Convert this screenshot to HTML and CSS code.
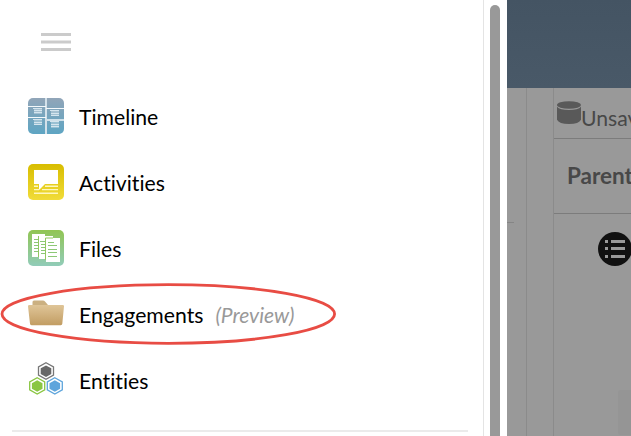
FILE: index.html
```html
<!DOCTYPE html>
<html lang="en">
<head>
<meta charset="utf-8">
<title>Navigation</title>
<link rel="stylesheet" href="styles.css">
</head>
<body>
<div class="app">
  <aside class="sidebar">
    <nav class="pane">
      <svg class="burger" viewBox="0 0 30 18"><path fill="#cbcbcb" d="M0 0h30v3H0zM0 7.400h30v3H0zM0 15h30v3H0z"/></svg>
      <ul class="menu">
        <li class="item">
          <svg class="icon" viewBox="0 0 36 36">
            <defs><linearGradient id="blue" x2="0" y2="1"><stop stop-color="#91a5b8"/><stop offset="1" stop-color="#5ea5c3"/></linearGradient></defs>
            <rect width="36" height="36" rx="5" fill="url(#blue)"/>
            <path fill="#d3e1ea" d="M17 0h2v36h-2z"/>
            <path fill="#f4f8fa" d="M0 8h18v1H0zM0 19h18v1H0zM18 10h18v1H18z"/>
            <path fill="#cfe0e9" d="M18 21h18v2H18z"/>
            <path fill="#fff" opacity=".3" d="M6 10h8v6H6zM6 21h8v6H6zM23 12h8v6h-8zM23 23h8v7h-8z"/>
            <path fill="#d5e5ee" d="M5 10h9v1H5zM6 12h8v1H6zM6 14h8v1H6zM5 21h9v1H5zM6 24h8v1H6zM6 26h8v1H6zM22 12h9v1h-9zM23 15h8v1h-8zM23 17h8v1h-8zM22 23h9v1h-9zM23 26h8v1h-8zM23 28h8v1h-8z"/>
          </svg>
          <span class="label">Timeline</span>
        </li>
        <li class="item">
          <svg class="icon" viewBox="0 0 36 36">
            <defs><linearGradient id="gold" x2="0" y2="1"><stop stop-color="#d8bd00"/><stop offset="1" stop-color="#f1dc39"/></linearGradient></defs>
            <rect width="36" height="36" rx="5" fill="url(#gold)"/>
            <path fill="#fff" d="M6 6h24v14H17l-6 6v-6H6z"/>
            <path fill="#fff8bf" d="M6 21.500h4V23H6zM17 21.500h13V23H17zM6 25h5v1.300H6zM14 25h16v1.300H14zM6 28.500h24V30H6z"/>
          </svg>
          <span class="label">Activities</span>
        </li>
        <li class="item">
          <svg class="icon" viewBox="0 0 36 36">
            <defs><linearGradient id="green" x2="0" y2="1"><stop stop-color="#91c553"/><stop offset="1" stop-color="#91ccb9"/></linearGradient></defs>
            <rect width="36" height="36" rx="5" fill="url(#green)"/>
            <path fill="#fff" d="M4 4h13v2h8v2h7v24H18v-3h-7v-2H4z"/>
            <path fill="none" stroke="#92c760" d="M10.500 27V6M17.500 30V8H25"/>
            <path fill="#8dc876" d="M6 9h4v1H6zM6 12h4v1H6zM6 15h4v1H6zM6 18h4v1H6zM6 21h4v1H6zM12 11h5v1h-5zM13 14h4v1h-4zM13 17h4v1h-4zM13 20h4v1h-4zM13 23h4v1h-4z"/>
            <path fill="#8dc876" d="M20 12h6v1h-6zM20 15h9v1h-9zM20 19h9v1h-9zM20 22h9v1h-9zM20 26h9v1h-9z"/>
          </svg>
          <span class="label">Files</span>
        </li>
        <li class="item">
          <svg class="icon" viewBox="0 0 36 36">
            <defs><linearGradient id="tan" x2="0" y2="1"><stop stop-color="#dfc598"/><stop offset="1" stop-color="#c29d63"/></linearGradient></defs>
            <path fill="#cbb081" d="M4.500 10V6q0-1.500 1.500-1.500h9q1.300 0 2 1L20 9v2H4.500z"/>
            <path fill="url(#tan)" d="M1.200 9h33.600q1.300 0 1.200 1.300l-1.700 17.500q-.1 1.400-1.500 1.400H3.500q-1.400 0-1.500-1.400L0 10.300Q0 9 1.200 9z"/>
          </svg>
          <span class="label">Engagements</span>
          <em class="note">(Preview)</em>
        </li>
        <li class="item">
          <svg class="icon" viewBox="0 0 36 36">
            <g fill="none" stroke-width="1.300">
              <path stroke="#777" d="M18 .8l7.500 4.200v8L18 17.200 10.500 13V5z"/>
              <path stroke="#8ac642" d="M9.200 15.700l7.500 4.200v8l-7.500 4.200-7.500-4.200v-8z"/>
              <path stroke="#5ea5dc" d="M26.800 15.700l7.500 4.200v8l-7.500 4.200-7.500-4.200v-8z"/>
            </g>
            <path fill="#686868" d="M18 3.400l5.300 2.900v5.600L18 14.900l-5.300-3V6.300z"/>
            <path fill="#8ac642" d="M9.200 18.300l5.300 2.900v5.600l-5.300 3-5.300-3v-5.600z"/>
            <path fill="#5ea5dc" d="M26.800 18.300l5.300 2.900v5.600l-5.300 3-5.300-3v-5.600z"/>
          </svg>
          <span class="label">Entities</span>
        </li>
      </ul>
      <hr class="rule">
    </nav>
    <div class="track"><div class="thumb"></div></div>
  </aside>
  <div class="page">
    <header class="banner"></header>
    <div class="columns">
      <div class="stub"><div class="tick"></div></div>
      <div class="gutter"></div>
      <main class="content">
        <div class="status">
          <svg class="disk" viewBox="0 0 24 24"><path fill="#595959" d="M0 5.700q3 3.200 12 3.200t12-3.200v13q-2 4.200-12 4.200T0 18.700z"/><ellipse cx="12" cy="4" rx="12" ry="3.800" fill="#595959"/></svg>
          <span>Unsaved</span>
        </div>
        <div class="heading">Parent</div>
        <div class="body">
          <svg class="list" viewBox="0 0 34 34"><circle cx="17" cy="17" r="17" fill="#111"/><path fill="#999" d="M7 8h3v3H7zM13 8h14v3H13zM7 15h3v3H7zM13 15h14v3H13zM7 23h3v3H7zM13 23h14v3H13z"/></svg>
          <div class="tile"></div>
        </div>
      </main>
    </div>
  </div>
  <svg class="marker" viewBox="0 0 336 64"><ellipse cx="168.300" cy="32" rx="166.300" ry="29.300" fill="none" stroke="#e84c44" stroke-width="2.800"/></svg>
</div>
</body>
</html>
```
FILE: styles.css
```css
* { box-sizing: border-box; }
body { margin: 0; font-family: Lato, "Liberation Sans", sans-serif; font-size: 21.2px; font-variant-ligatures: none; color: #000; }
svg { display: block; flex: none; }
.app { position: relative; display: flex; width: 631px; height: 436px; overflow: hidden; background: #fff; }
.sidebar { display: flex; flex: none; width: 507px; }
.pane { width: 484px; padding: 33px 15px 0 12px; border-right: 1px solid #e4e4e4; }
.burger { width: 30px; height: 18px; margin-left: 29px; }
.menu { list-style: none; margin: 32px 0 0; padding: 0 0 0 16px; }
.item { display: flex; align-items: center; height: 66px; white-space: nowrap; }
.icon { width: 36px; height: 36px; margin-right: 15px; }
.label, .note { line-height: 30px; padding-top: 2px; }
.note { margin-left: 12px; font-size: 21px; color: #999; }
.rule { height: 2px; margin: 17px 0 0; border: 0; background: #ebebeb; }
.track { flex: 1; padding: 5px 7px 0 6px; }
.thumb { width: 10px; height: 440px; border-radius: 5px; background: #999; }
.page { display: flex; flex-direction: column; flex: 1; min-width: 0; overflow: hidden; background: #999; color: #484848; }
.banner { flex: none; height: 88px; background: linear-gradient(#445463, #495968); }
.columns { display: flex; flex: 1; }
.stub { flex: none; width: 20px; padding-top: 134px; border-right: 1px solid #8b8b8b; }
.tick { width: 7px; height: 1px; background: #858585; }
.gutter { flex: none; width: 26px; }
.content { flex: none; width: 160px; border-left: 1px solid #8b8b8b; }
.status { display: flex; height: 51px; padding: 13px 0 0 3px; border-bottom: 1px solid #7c7c7c; line-height: 34px; }
.disk { width: 24px; height: 24px; }
.heading { height: 75px; padding-left: 13px; border-bottom: 1px solid #7c7c7c; font-size: 22.5px; font-weight: 700; line-height: 74px; }
.body { padding: 18px 0 0 44px; }
.list { width: 34px; height: 34px; }
.tile { width: 80px; height: 45px; margin: 124px 0 0 20px; border-radius: 3px; background: #959595; }
.marker { position: absolute; left: 0; top: 282px; width: 336px; height: 64px; }
```
